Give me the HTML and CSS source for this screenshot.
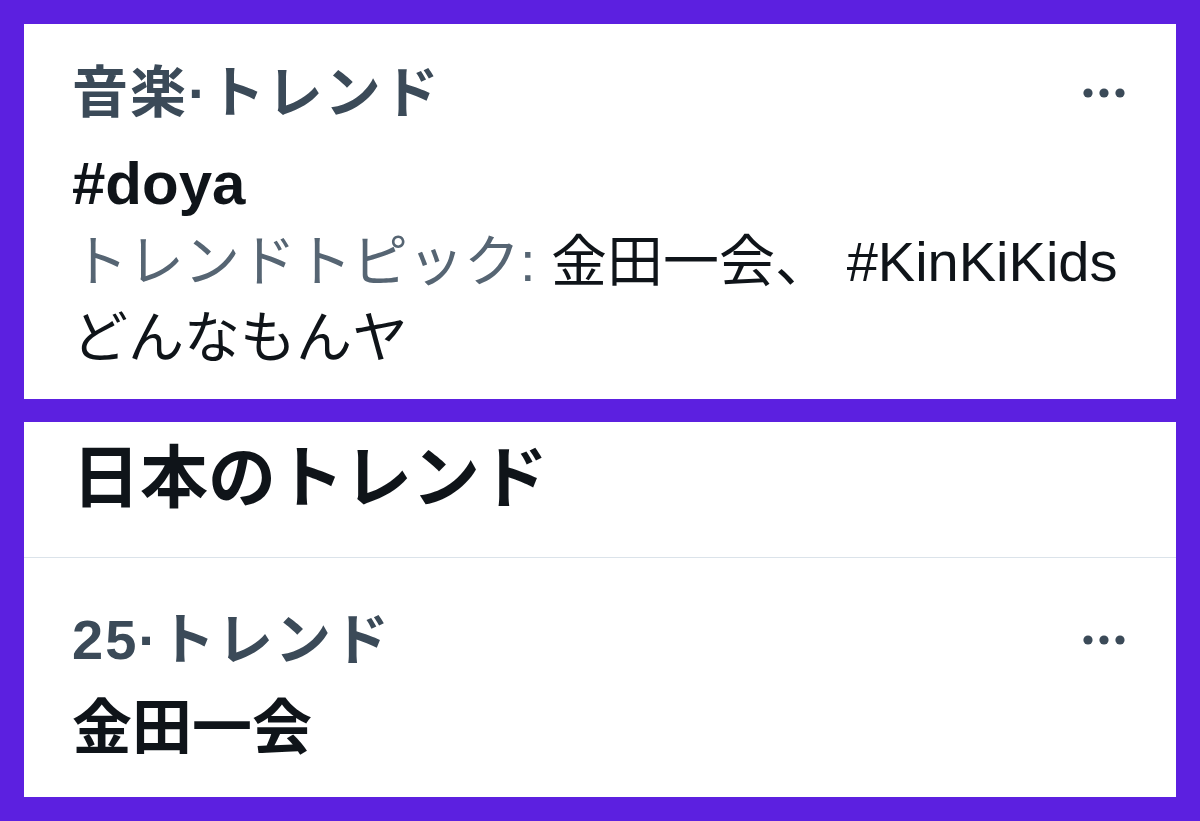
FILE: index.html
```html
<!DOCTYPE html>
<html lang="ja">
<head>
    <meta charset="UTF-8">
    <meta name="viewport" content="width=device-width, initial-scale=1.0">
    <title>トレンド</title>
    <link rel="stylesheet" href="styles.css">
</head>
<body>
    <div class="page">
        <div class="card">
            <div class="trend first">
                <div class="trend-meta">
                    <span>音楽·トレンド</span>
                    <button class="more" aria-label="もっと見る">
                        <svg width="48" height="20" viewBox="0 0 48 20"><circle cx="8" cy="10" r="4.6"/><circle cx="24" cy="10" r="4.6"/><circle cx="40" cy="10" r="4.6"/></svg>
                    </button>
                </div>
                <div class="trend-name">#doya</div>
                <div class="trend-topic"><span class="muted">トレンドトピック:</span> 金田一会、 #KinKiKidsどんなもんヤ</div>
            </div>
        </div>

        <div class="card">
            <h2 class="section-title">日本のトレンド</h2>
            <div class="trend second">
                <div class="trend-meta">
                    <span>25·トレンド</span>
                    <button class="more" aria-label="もっと見る">
                        <svg width="48" height="20" viewBox="0 0 48 20"><circle cx="8" cy="10" r="4.6"/><circle cx="24" cy="10" r="4.6"/><circle cx="40" cy="10" r="4.6"/></svg>
                    </button>
                </div>
                <div class="trend-name">金田一会</div>
            </div>
        </div>
    </div>
</body>
</html>
```

FILE: styles.css
```css
body {
    margin: 0;
    background-color: #5c20e0;
    font-family: "Liberation Sans", "Noto Sans CJK JP", sans-serif;
    color: #0f1419;
}

.page {
    padding: 24px;
    display: flex;
    flex-direction: column;
    gap: 23px;
}

.card {
    background-color: #fff;
    height: 375px;
    box-sizing: border-box;
}

.trend {
    padding: 0 48px;
}

.trend.first {
    padding-top: 29px;
}

.trend.second {
    padding-top: 42px;
}

.trend-meta {
    display: flex;
    justify-content: space-between;
    align-items: center;
    font-size: 56px;
    line-height: 80px;
    letter-spacing: 2px;
    font-weight: bold;
    color: #3b4a58;
}

.more {
    background: none;
    border: none;
    padding: 0;
    width: 48px;
    height: 20px;
    display: flex;
    fill: #3b4a58;
}

.trend-name {
    margin-top: 11px;
    font-size: 60px;
    line-height: 80px;
    font-weight: bold;
}

.trend.second .trend-name {
    margin-top: 9px;
}

.trend-topic {
    font-size: 56px;
    line-height: 76px;
}

.muted {
    color: #566573;
}

.section-title {
    margin: 0;
    padding: 16px 48px 39px;
    font-size: 68px;
    line-height: 80px;
    font-weight: bold;
    border-bottom: 1px solid #dbe3ea;
}
```
